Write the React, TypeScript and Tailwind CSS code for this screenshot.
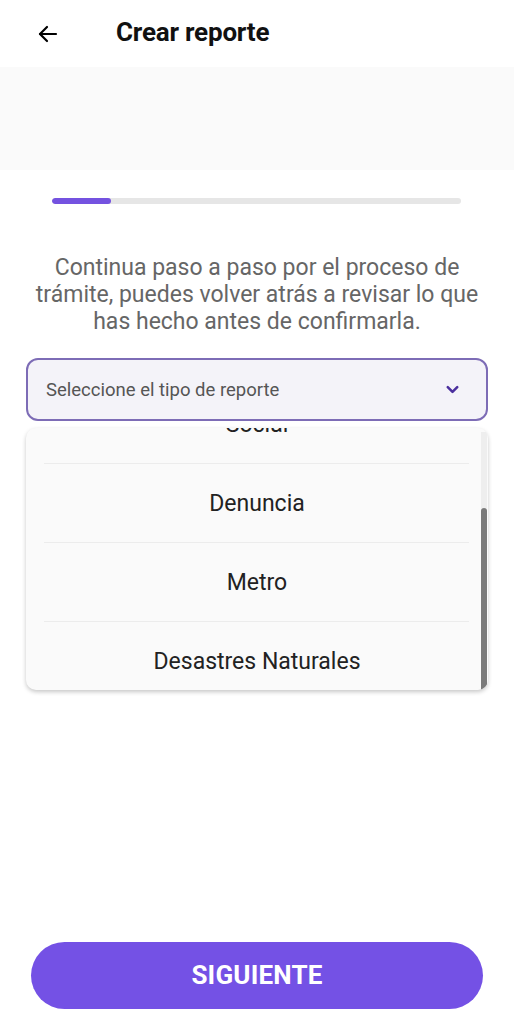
const options = ["Social", "Denuncia", "Metro", "Desastres Naturales"];

const App = () => {
  return (
    <div className="min-h-[1024px] flex flex-col bg-white font-['Roboto','Noto_Sans',sans-serif]">
      <div className="h-[67px] flex items-center">
        <button type="button" className="ml-[34px] w-[28px] h-[28px] flex items-center justify-center text-black">
          <svg width="24" height="24" viewBox="0 0 24 24" fill="none" stroke="currentColor" strokeWidth="2.2" strokeLinecap="round" strokeLinejoin="round">
            <path d="M20 12H4" />
            <path d="M11 5l-7 7 7 7" />
          </svg>
        </button>
        <h1 className="ml-[54px] text-[26px] font-bold text-[#111] tracking-[-0.2px] -mt-[3px]">Crear reporte</h1>
      </div>

      <div className="h-[103px] bg-[#fafafa]" />

      <div className="mt-[28px] mx-[52px] w-[409px] h-[6px] rounded-full bg-[#e6e6e6] overflow-hidden">
        <div className="h-full w-[59px] rounded-full bg-[#7452e0]" />
      </div>

      <p className="mt-[50px] px-[30px] text-center text-[23px] leading-[27px] text-[#666]">
        Continua paso a paso por el proceso de trámite, puedes volver atrás a revisar lo que has hecho antes de confirmarla.
      </p>

      <div className="mt-[23px] mx-[26px] h-[63px] rounded-[12px] border-2 border-[#7d6cb6] bg-[#f4f3f9] flex items-center justify-between pl-[18px] pr-[24px]">
        <span className="pt-[2px] text-[18.5px] text-[#555]">Seleccione el tipo de reporte</span>
        <svg width="19" height="19" viewBox="0 0 24 24" fill="none" stroke="#4b2f9e" strokeWidth="3.2" strokeLinecap="round" strokeLinejoin="round">
          <path d="M6 9l6 6 6-6" />
        </svg>
      </div>

      <div className="relative mt-[7px] mx-[26px] h-[262px] rounded-[10px] bg-[#fafafa] shadow-[0_2px_4px_rgba(0,0,0,0.22)] overflow-hidden">
        <div className="-mt-[43px]">
          {options.map((option, index) => (
            <div key={option}>
              {index > 0 && <div className="ml-[18px] mr-[19px] h-px bg-[#ececec]" />}
              <div className="h-[78px] pt-[3px] flex items-center justify-center text-[23px] text-[#222]">{option}</div>
            </div>
          ))}
        </div>
        <div className="absolute right-[1px] top-[4px] bottom-0 w-[6px] bg-[#eeeeee]">
          <div className="absolute bottom-0 left-0 right-0 h-[182px] rounded-t-full bg-[#7a7a7a]" />
        </div>
      </div>

      <button
        type="button"
        className="mt-auto mb-[15px] mx-[31px] h-[67px] rounded-full bg-[#7451e5] text-white text-[26px] font-bold tracking-[0.2px]"
      >
        SIGUIENTE
      </button>
    </div>
  );
};

export default App;
